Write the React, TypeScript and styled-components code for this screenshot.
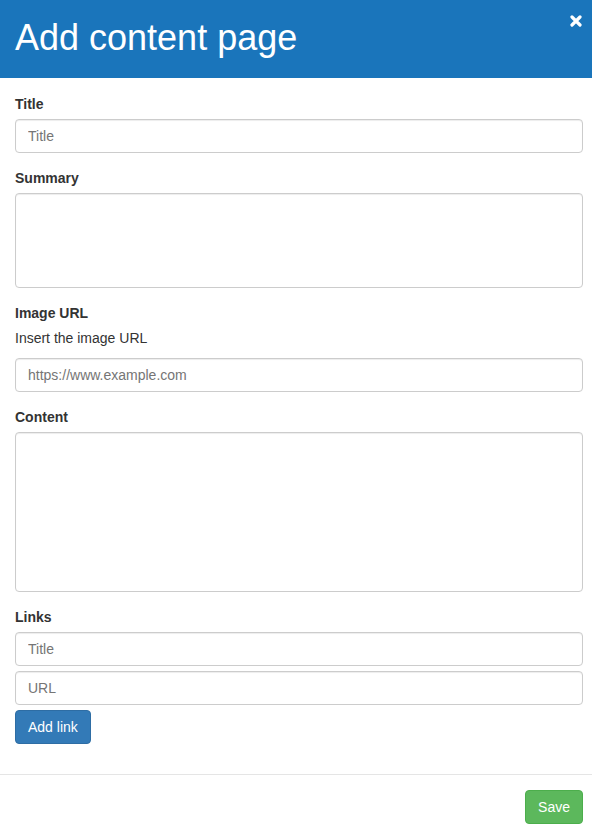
import * as React from 'react';
import styled, { createGlobalStyle } from 'styled-components';

const GlobalStyle = createGlobalStyle`
  html, body {
    margin: 0;
    padding: 0;
    background: #fff;
  }
  body {
    font-family: "Liberation Sans", Arial, sans-serif;
    font-size: 14px;
    line-height: 20px;
    color: #333;
  }
  * {
    box-sizing: border-box;
  }
`;

const Modal = styled.div`
  width: 592px;
  min-height: 834px;
  background: #fff;
  display: flex;
  flex-direction: column;
`;

const Header = styled.header`
  height: 78px;
  background: #1a75bb;
  color: #fff;
  display: flex;
  align-items: flex-start;
  justify-content: space-between;
  padding: 0 9px 0 15px;
`;

const Heading = styled.h1`
  margin: 0;
  padding-top: 18px;
  font-size: 36px;
  line-height: 40px;
  font-weight: 400;
`;

const Close = styled.button`
  border: 0;
  background: none;
  padding: 0;
  margin-top: 13px;
  width: 14px;
  height: 16px;
  display: flex;
  align-items: center;
  justify-content: center;
  cursor: pointer;
`;

const Body = styled.form`
  padding: 16px 9px 15px 15px;
  display: flex;
  flex-direction: column;
`;

const Group = styled.div<{ $gap?: number }>`
  display: flex;
  flex-direction: column;
  gap: ${p => p.$gap ?? 0}px;
  margin-bottom: 15px;
`;

const Label = styled.label<{ $tight?: boolean }>`
  font-weight: 700;
  margin-bottom: ${p => (p.$tight ? 0 : 5)}px;
`;

const Help = styled.p`
  margin: 0 0 10px;
`;

const Input = styled.input`
  display: block;
  width: 100%;
  height: 34px;
  padding: 6px 12px;
  font-family: inherit;
  font-size: 14px;
  color: #555;
  background: #fff;
  border: 1px solid #ccc;
  border-radius: 4px;
  box-shadow: inset 0 1px 1px rgba(0, 0, 0, 0.075);
  ::placeholder {
    color: #999;
  }
`;

const TextArea = styled.textarea<{ $h: number }>`
  display: block;
  width: 100%;
  height: ${p => p.$h}px;
  padding: 6px 12px;
  font-family: inherit;
  font-size: 14px;
  color: #555;
  border: 1px solid #ccc;
  border-radius: 4px;
  box-shadow: inset 0 1px 1px rgba(0, 0, 0, 0.075);
  resize: none;
`;

const Button = styled.button<{ $variant: 'primary' | 'success' }>`
  align-self: flex-start;
  height: 34px;
  padding: 6px 12px;
  font-family: inherit;
  font-size: 14px;
  line-height: 20px;
  color: #fff;
  border-radius: 4px;
  border: 1px solid ${p => (p.$variant === 'primary' ? '#2e6da4' : '#4cae4c')};
  background: ${p => (p.$variant === 'primary' ? '#337ab7' : '#5cb85c')};
  cursor: pointer;
`;

const Footer = styled.footer`
  border-top: 1px solid #e5e5e5;
  padding: 15px 9px 15px 15px;
  display: flex;
  justify-content: flex-end;
`;

export default function App() {
  return (
    <>
      <GlobalStyle />
      <Modal>
        <Header>
          <Heading>Add content page</Heading>
          <Close aria-label="Close">
            <svg width="12" height="12" viewBox="0 0 12 12">
              <path
                d="M2 2 L10 10 M10 2 L2 10"
                stroke="#fff"
                strokeWidth="3.2"
                strokeLinecap="round"
              />
            </svg>
          </Close>
        </Header>
        <Body onSubmit={e => e.preventDefault()}>
          <Group>
            <Label>Title</Label>
            <Input placeholder="Title" />
          </Group>
          <Group>
            <Label>Summary</Label>
            <TextArea $h={95} />
          </Group>
          <Group>
            <Label>Image URL</Label>
            <Help>Insert the image URL</Help>
            <Input placeholder="https://www.example.com" />
          </Group>
          <Group>
            <Label>Content</Label>
            <TextArea $h={160} />
          </Group>
          <Group $gap={5}>
            <Label $tight>Links</Label>
            <Input placeholder="Title" />
            <Input placeholder="URL" />
            <Button type="button" $variant="primary">Add link</Button>
          </Group>
        </Body>
        <Footer>
          <Button type="button" $variant="success">Save</Button>
        </Footer>
      </Modal>
    </>
  );
}
